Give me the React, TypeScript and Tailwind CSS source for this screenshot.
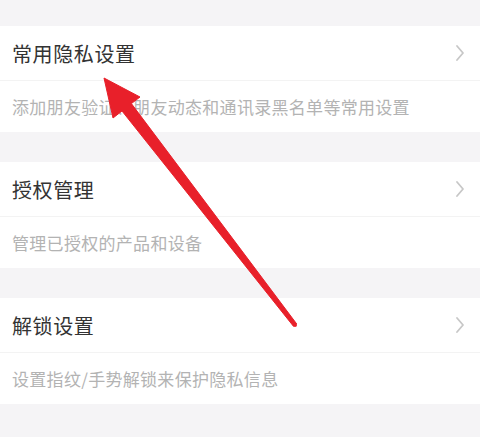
import React from "react";

type Item = { title: string; desc: string };

const items: Item[] = [
  { title: "常用隐私设置", desc: "添加朋友验证、朋友动态和通讯录黑名单等常用设置" },
  { title: "授权管理", desc: "管理已授权的产品和设备" },
  { title: "解锁设置", desc: "设置指纹/手势解锁来保护隐私信息" },
];

const Chevron: React.FC = () => (
  <svg width="10" height="18" viewBox="0 0 10 18" fill="none">
    <path d="M2 2l6 7-6 7" stroke="#c7c7c7" strokeWidth="1.8" strokeLinecap="round" strokeLinejoin="round" />
  </svg>
);

const Card: React.FC<{ item: Item }> = ({ item }) => (
  <div className="bg-white">
    <div className="flex h-[55px] items-center justify-between border-b border-[#f3f3f3] pl-3 pr-[15px]">
      <span className="pt-[2px] text-[20px] tracking-[0.6px] text-[#333333]">{item.title}</span>
      <Chevron />
    </div>
    <div className="flex h-[51px] items-center pl-3">
      <span className="text-[17px] tracking-[0.3px] text-[#b3b3b3]">{item.desc}</span>
    </div>
  </div>
);

export default function App() {
  return (
    <div
      className="relative h-[437px] w-[480px] overflow-hidden bg-[#f5f4f6]"
      style={{ fontFamily: '"Noto Sans CJK SC", "Noto Sans", sans-serif' }}
    >
      <div className="flex flex-col gap-[30px] pt-[26px]">
        {items.map((item) => (
          <Card key={item.title} item={item} />
        ))}
      </div>

      {/* red annotation arrow */}
      <svg className="pointer-events-none absolute left-0 top-0" width="480" height="437" viewBox="0 0 480 437">
        <polygon
          points="104,78 140,97 131.4,103.6 296.6,323.8 293.4,326.2 122,111 113,118"
          fill="#e8202a"
          stroke="#e8202a"
          strokeWidth="1"
          strokeLinejoin="round"
        />
        <circle cx="295" cy="325" r="2" fill="#e8202a" />
      </svg>
    </div>
  );
}
